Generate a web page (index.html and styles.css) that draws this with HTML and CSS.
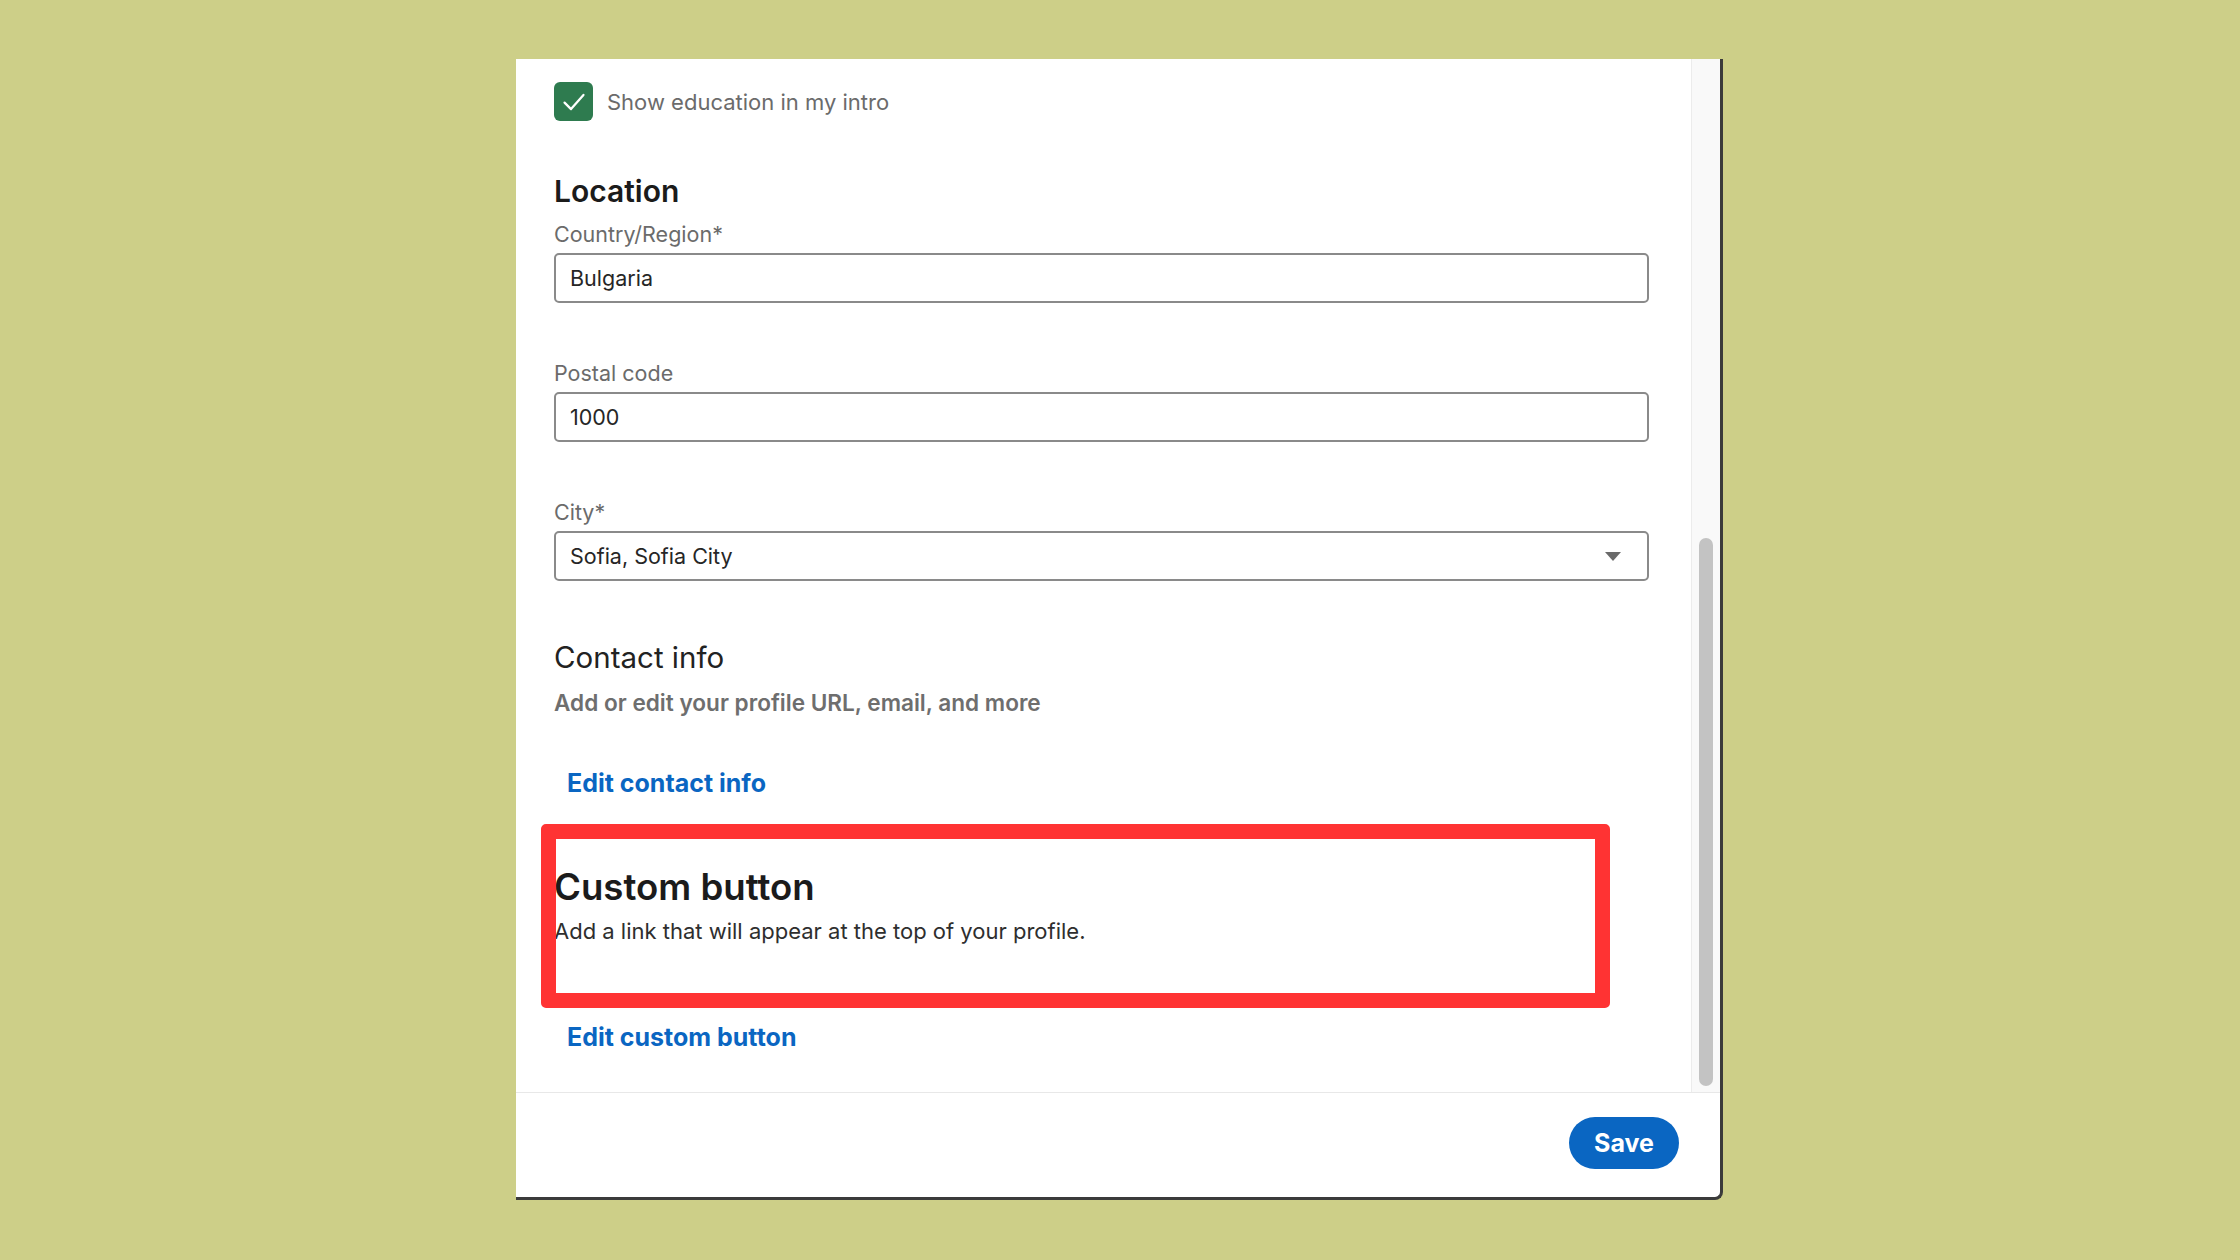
FILE: index.html
```html
<!DOCTYPE html>
<html lang="en">
  <head>
    <meta charset="UTF-8" />
    <meta name="viewport" content="width=device-width, initial-scale=1.0" />
    <title>Edit intro</title>
    <link rel="stylesheet" href="styles.css">
  </head>
  <body>

      <div class="modal">
          <div class="modal-body">
              <div class="content">

                  <label class="check-row">
                      <span class="checkbox">
                          <svg width="26" height="26" viewBox="0 0 22 22">
                              <polyline points="3,11.5 8.5,17 19,5" fill="none" stroke="#fff" stroke-width="1.9" stroke-linecap="round" stroke-linejoin="round"/>
                          </svg>
                      </span>
                      <span class="check-text">Show education in my intro</span>
                  </label>

                  <h2 class="section-title">Location</h2>

                  <div class="field first">
                      <div class="field-label">Country/Region*</div>
                      <div class="input">Bulgaria</div>
                  </div>

                  <div class="field">
                      <div class="field-label">Postal code</div>
                      <div class="input">1000</div>
                  </div>

                  <div class="field">
                      <div class="field-label">City*</div>
                      <div class="input select">
                          <span>Sofia, Sofia City</span>
                          <span class="caret"></span>
                      </div>
                  </div>

                  <h2 class="plain-title">Contact info</h2>
                  <p class="muted">Add or edit your profile URL, email, and more</p>
                  <a class="edit-link contact" href="#">Edit contact info</a>

                  <h2 class="big-title">Custom button</h2>
                  <p class="desc">Add a link that will appear at the top of your profile.</p>
                  <a class="edit-link custom" href="#">Edit custom button</a>

                  <div class="highlight"></div>
              </div>

              <div class="scrollbar">
                  <div class="thumb"></div>
              </div>
          </div>

          <div class="modal-footer">
              <button class="save">Save</button>
          </div>
      </div>

  </body>
</html>
```

FILE: styles.css
```css
body {
    margin: 0;
    background: #cdcf88;
    font-family: Inter, "Noto Sans", sans-serif;
}

.modal {
    width: 1204px;
    margin: 59px 0 0 516px;
    background: #fff;
    border-right: 3px solid #3b3b3b;
    border-bottom: 3px solid #3b3b3b;
    border-bottom-right-radius: 8px;
}

.modal-body {
    display: flex;
    position: relative;
    height: 1033px;
}

.content {
    flex: 1;
    padding: 23px 42px 0 38px;
}

/* checkbox row */
.check-row {
    display: flex;
    align-items: center;
    gap: 14px;
    height: 39px;
}

.checkbox {
    width: 39px;
    height: 39px;
    border-radius: 6px;
    background: #2e7b4f;
    display: flex;
    align-items: center;
    justify-content: center;
}

.check-text {
    font-size: 22px;
    color: #6b6b6b;
}

/* headings */
.section-title {
    margin: 52px 0 0;
    font-size: 30px;
    line-height: 36px;
    font-weight: 600;
    color: #1b1b1b;
}

.plain-title {
    margin: 59px 0 0;
    font-size: 29.5px;
    line-height: 34px;
    font-weight: 400;
    color: #222;
}

.big-title {
    margin: 69px 0 0;
    font-size: 36.6px;
    line-height: 40px;
    font-weight: 600;
    color: #1b1b1b;
}

/* fields */
.field {
    margin-top: 56px;
}

.field.first {
    margin-top: 11px;
}

.field-label {
    font-size: 21.5px;
    line-height: 28px;
    color: #6b6b6b;
    margin-bottom: 5px;
}

.input {
    box-sizing: border-box;
    height: 50px;
    border: 2px solid #8a8a8a;
    border-radius: 5px;
    padding: 0 14px;
    display: flex;
    align-items: center;
    font-size: 21.5px;
    color: #262626;
}

.select {
    justify-content: space-between;
    padding-right: 26px;
}

.caret {
    width: 0;
    height: 0;
    border-left: 8px solid transparent;
    border-right: 8px solid transparent;
    border-top: 9px solid #6a6a6a;
}

/* text */
.muted {
    margin: 15px 0 0;
    font-size: 22.6px;
    line-height: 28px;
    font-weight: 600;
    color: #6e6e6e;
}

.desc {
    margin: 10px 0 0;
    font-size: 22px;
    line-height: 28px;
    color: #2e2e2e;
}

.edit-link {
    display: block;
    margin-left: 13px;
    font-size: 25px;
    line-height: 30px;
    font-weight: 700;
    color: #0a66c2;
    text-decoration: none;
}

.edit-link.contact {
    margin-top: 51px;
}

.edit-link.custom {
    margin-top: 77px;
}

/* red annotation box drawn over the section */
.highlight {
    position: absolute;
    left: 25px;
    top: 765px;
    width: 1069px;
    height: 184px;
    box-sizing: border-box;
    border: 15px solid #ff3333;
    border-radius: 5px;
}

/* scrollbar */
.scrollbar {
    width: 29px;
    background: #f9f9f9;
    border-left: 1px solid #ececec;
    box-sizing: border-box;
    display: flex;
    flex-direction: column;
    justify-content: flex-end;
    align-items: center;
    padding: 0 0 6px 0;
}

.thumb {
    width: 14px;
    height: 548px;
    border-radius: 7px;
    background: #c3c3c3;
}

/* footer */
.modal-footer {
    border-top: 1px solid #e8e8e8;
    display: flex;
    justify-content: flex-end;
    padding: 24px 41px 28px 0;
}

.save {
    width: 110px;
    height: 52px;
    border: 0;
    border-radius: 26px;
    background: #0a66c2;
    color: #fff;
    font-family: Inter, "Noto Sans", sans-serif;
    font-size: 25px;
    font-weight: 700;
}
```
